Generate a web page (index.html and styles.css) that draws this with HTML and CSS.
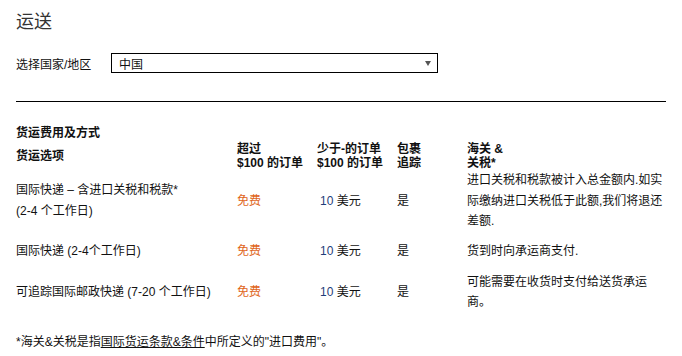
FILE: index.html
```html
<!DOCTYPE html>
<html lang="zh-CN">
<head>
    <meta charset="UTF-8">
    <meta name="viewport" content="width=device-width, initial-scale=1.0">
    <title>运送</title>
    <link rel="stylesheet" href="styles.css">
</head>
<body>
    <div class="shipping">
        <h1>运送</h1>

        <div class="country-row">
            <label for="country">选择国家/地区</label>
            <div class="select-box">
                <span>中国</span>
                <span class="arrow"></span>
            </div>
        </div>

        <hr>

        <h2>货运费用及方式</h2>
        <table class="rates">
            <thead>
                <tr>
                    <th class="c-method">货运选项</th>
                    <th class="c-over">超过<br><span class="num">$100</span> 的订单</th>
                    <th class="c-under">少于-的订单<br><span class="num">$100</span> 的订单</th>
                    <th class="c-track">包裹<br>追踪</th>
                    <th class="c-duty">海关 &amp;<br>关税*</th>
                </tr>
            </thead>
            <tbody>
                <tr>
                    <td>国际快递 – 含进口关税和税款*<br>(2-4 个工作日)</td>
                    <td class="free">免费</td>
                    <td class="price"><span class="amount">10</span> 美元</td>
                    <td>是</td>
                    <td>进口关税和税款被计入总金额内.如实际缴纳进口关税低于此额,我们将退还差额.</td>
                </tr>
                <tr>
                    <td>国际快递 (2-4个工作日)</td>
                    <td class="free">免费</td>
                    <td class="price"><span class="amount">10</span> 美元</td>
                    <td>是</td>
                    <td>货到时向承运商支付.</td>
                </tr>
                <tr>
                    <td>可追踪国际邮政快递 (7-20 个工作日)</td>
                    <td class="free">免费</td>
                    <td class="price"><span class="amount">10</span> 美元</td>
                    <td>是</td>
                    <td>可能需要在收货时支付给送货承运商。</td>
                </tr>
            </tbody>
        </table>

        <p class="note">*海关&amp;关税是指<a href="#">国际货运条款&amp;条件</a>中所定义的"进口费用"。</p>
    </div>
</body>
</html>
```

FILE: styles.css
```css
body {
    margin: 0;
    font-family: "Liberation Sans", "Noto Sans CJK SC", sans-serif;
    font-size: 12px;
    color: #111;
    background: #fff;
}
.shipping {
    width: 650px;
    padding: 10px 16px 0;
}
h1 {
    margin: 0;
    font-size: 18px;
    font-weight: normal;
    line-height: 24px;
    color: #333;
}
.country-row {
    display: flex;
    align-items: center;
    margin-top: 19px;
}
.country-row label {
    width: 95px;
    font-size: 12px;
}
.select-box {
    width: 311px;
    height: 18px;
    border: 1px solid #000;
    display: flex;
    align-items: center;
    justify-content: space-between;
    padding: 0 7px;
}
.arrow {
    width: 0;
    height: 0;
    border-left: 3px solid transparent;
    border-right: 3px solid transparent;
    border-top: 5px solid #555;
    margin-right: -1px;
}
hr {
    margin: 28px 0 0;
    border: none;
    border-top: 1px solid #000;
}
h2 {
    margin: 22px 0 0;
    font-size: 12px;
    line-height: 18px;
}
.rates {
    border-collapse: collapse;
    width: 650px;
    table-layout: fixed;
}
.rates th {
    text-align: left;
    vertical-align: middle;
    font-size: 12px;
    line-height: 14px;
    height: 28px;
    padding: 0;
}
.rates th .num {
    font-family: "Liberation Sans Narrow", "Liberation Sans", sans-serif;
}
.c-method { width: 221px; }
.c-over { width: 80px; }
.c-under { width: 80px; }
.c-track { width: 70px; }
.c-duty { width: 199px; }
.rates td {
    vertical-align: middle;
    line-height: 20.5px;
    height: 40px;
    padding: 0;
}
.rates td.free {
    color: #e0651a;
}
.rates td.price {
    padding-left: 3px;
}
.amount {
    color: #1f3d7a;
}
.note {
    margin: 19px 0 0;
    line-height: 20px;
}
.note a {
    color: inherit;
    text-decoration: underline;
}
```
